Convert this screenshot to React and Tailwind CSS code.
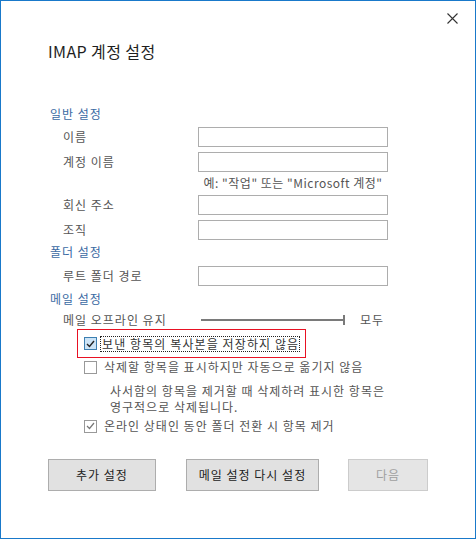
import React from "react";

const font = { fontFamily: '"Noto Sans CJK KR", "Noto Sans", sans-serif' };

function Header({ children, mt }) {
  return (
    <div className={`h-[16px] pl-[49px] text-[12px] leading-[16px] tracking-[1px] text-[#3b6aa3] ${mt}`}>{children}</div>
  );
}

function Row({ label, mt }) {
  return (
    <div className={`flex h-[20px] items-center ${mt}`}>
      <div className="w-[197px] pl-[62px] text-[12px] leading-[16px] tracking-[1px] text-[#555]">{label}</div>
      <div className="h-[20px] w-[190px] border border-[#adadad] bg-white" />
    </div>
  );
}

function Check({ variant }) {
  if (variant === "hover") {
    return (
      <div className="flex h-[13px] w-[13px] shrink-0 items-center justify-center border border-[#3c7fb1] bg-[#cce4f7]">
        <svg width="9" height="8" viewBox="0 0 9 8"><path d="M1 4 L3.5 6.5 L8 1" fill="none" stroke="#222" strokeWidth="1.4" /></svg>
      </div>
    );
  }
  if (variant === "checked") {
    return (
      <div className="flex h-[13px] w-[13px] shrink-0 items-center justify-center border border-[#999] bg-white">
        <svg width="9" height="8" viewBox="0 0 9 8"><path d="M1 4 L3.5 6.5 L8 1" fill="none" stroke="#777" strokeWidth="1.2" /></svg>
      </div>
    );
  }
  return <div className="h-[13px] w-[13px] shrink-0 border border-[#999] bg-white" />;
}

export default function App() {
  return (
    <div style={font} className="relative box-border h-[539px] w-[476px] border border-[#1979ca] bg-white text-[#222]">
      <button className="absolute right-[17px] top-[11px] flex h-[12px] w-[12px] items-center justify-center">
        <svg width="11" height="11" viewBox="0 0 11 11"><path d="M0.5 0.5 L10.5 10.5 M10.5 0.5 L0.5 10.5" stroke="#333" strokeWidth="1.1" /></svg>
      </button>

      <div className="mt-[38px] h-[24px] pl-[47px] text-[16px] leading-[24px] tracking-[0.4px] text-[#1e1e1e]">IMAP 계정 설정</div>

      <Header mt="mt-[43px]">일반 설정</Header>
      <Row label="이름" mt="mt-[5px]" />
      <Row label="계정 이름" mt="mt-[5px]" />
      <div className="mt-[3px] flex h-[16px]">
        <div className="w-[197px]" />
        <div className="w-[190px] whitespace-nowrap text-center text-[12px] leading-[16px] tracking-[0.5px] text-[#555]">예: "작업" 또는 "Microsoft 계정"</div>
      </div>
      <Row label="회신 주소" mt="mt-[4px]" />
      <Row label="조직" mt="mt-[5px]" />

      <Header mt="mt-[4px]">폴더 설정</Header>
      <Row label="루트 폴더 경로" mt="mt-[6px]" />

      <Header mt="mt-[5px]">메일 설정</Header>
      <div className="mt-[5px] flex h-[16px] items-center">
        <div className="w-[200px] pl-[62px] text-[12px] leading-[16px] tracking-[1px] text-[#555]">메일 오프라인 유지</div>
        <div className="h-[2px] w-[142px] bg-[#7a7a7a]" />
        <div className="h-[10px] w-[2px] bg-[#7a7a7a]" />
        <div className="ml-[15px] text-[12px] leading-[16px] tracking-[1px] text-[#555]">모두</div>
      </div>

      <div className="ml-[76px] mt-[1px] box-border flex h-[29px] w-[229px] items-center border border-[#e81123] pl-[6px]">
        <Check variant="hover" />
        <div className="ml-[3px] whitespace-nowrap border border-dotted border-[#222] pl-[1px] text-[12px] leading-[14px] tracking-[1.1px] text-[#333]">보낸 항목의 복사본을 저장하지 않음</div>
      </div>

      <div className="mt-[1px] flex h-[16px] items-center pl-[83px]">
        <Check />
        <div className="ml-[7px] whitespace-nowrap text-[12px] leading-[16px] tracking-[1px] text-[#555]">삭제할 항목을 표시하지만 자동으로 옮기지 않음</div>
      </div>

      <div className="mt-[8px] pl-[109px] text-[12px] leading-[16px] tracking-[1px] text-[#555]">
        <div>사서함의 항목을 제거할 때 삭제하려 표시한 항목은</div>
        <div>영구적으로 삭제됩니다.</div>
      </div>

      <div className="mt-[3px] flex h-[16px] items-center pl-[83px]">
        <Check variant="checked" />
        <div className="ml-[7px] whitespace-nowrap text-[12px] leading-[16px] tracking-[1px] text-[#555]">온라인 상태인 동안 폴더 전환 시 항목 제거</div>
      </div>

      <div className="mt-[25px] flex h-[32px] pl-[47px] text-[12px] tracking-[1px]">
        <div className="box-border flex h-[32px] w-[108px] items-center justify-center border border-[#adadad] bg-[#e1e1e1] text-[#222]">추가 설정</div>
        <div className="ml-[30px] box-border flex h-[32px] w-[133px] items-center justify-center border border-[#adadad] bg-[#e1e1e1] text-[#222]">메일 설정 다시 설정</div>
        <div className="ml-[29px] box-border flex h-[32px] w-[80px] items-center justify-center border border-[#cccccc] bg-[#e5e5e5] text-[#a0a0a0]">다음</div>
      </div>
    </div>
  );
}
